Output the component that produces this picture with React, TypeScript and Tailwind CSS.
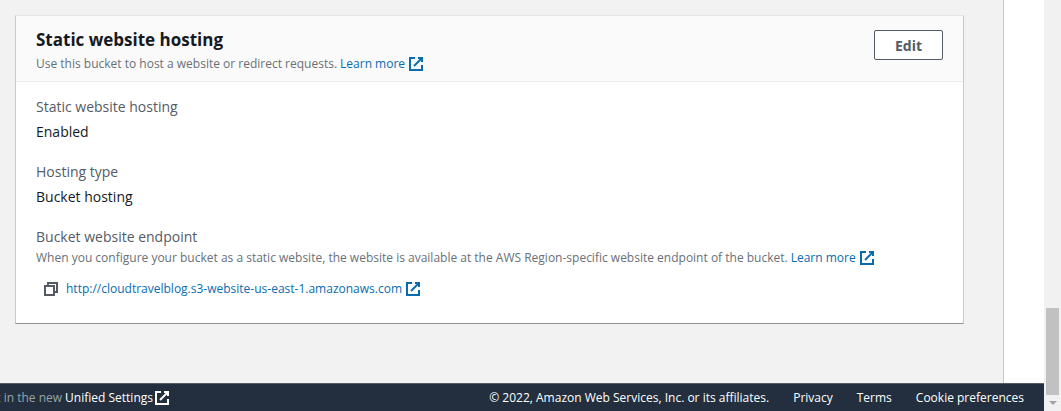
import type { ReactNode } from 'react';

function ExternalIcon() {
  return (
    <svg viewBox="0 0 16 16" className="size-4 shrink-0" fill="none" stroke="currentColor" strokeWidth="2" aria-hidden="true">
      <path d="M10 2h4v4" />
      <path d="m6 10 8-8" />
      <path d="M14 9.048V14H2V2h5" />
    </svg>
  );
}

function ExternalLink({ children }: { children: ReactNode }) {
  return (
    <a href="#" className="inline-flex items-center gap-[3px] text-[#0a6cb0]">
      {children}
      <ExternalIcon />
    </a>
  );
}

function Field({ label, children }: { label: string; children: ReactNode }) {
  return (
    <div>
      <dt className="text-[14px] leading-5 text-[#545b64]">{label}</dt>
      <dd className="mt-[5px] text-[14px] leading-5 text-[#16191f]">{children}</dd>
    </div>
  );
}

export default function App() {
  return (
    <div className="flex h-screen bg-white font-['Open_Sans','Noto_Sans',sans-serif]">
      <div className="flex min-w-0 flex-1 flex-col">
        <div className="flex min-h-0 flex-1">
          <main className="min-w-0 flex-1 border-r border-[#c5c9cc] bg-[#f2f2f2] pt-[15px] pr-[39px] pl-[15px]">
            <section className="border border-x-[#c8cbcc] border-t-[#e4e6e6] border-b-[#8d9296] bg-white">
              <header className="flex items-start justify-between border-b border-[#eaeded] bg-[#fafafa] pt-3 pr-5 pb-[7px] pl-5">
                <div>
                  <h2 className="text-[17px] leading-6 font-bold text-[#16191f]">Static website hosting</h2>
                  <p className="mt-0.5 flex gap-[3px] text-[12px] leading-5 text-[#687078]">
                    Use this bucket to host a website or redirect requests.
                    <ExternalLink>Learn more</ExternalLink>
                  </p>
                </div>
                <button type="button" className="mt-0.5 h-[30px] w-[69px] rounded-[2px] border border-[#545b64] bg-white text-[14px] font-bold text-[#545b64]">
                  Edit
                </button>
              </header>
              <dl className="flex flex-col gap-5 px-5 pt-[15px] pb-6">
                <Field label="Static website hosting">Enabled</Field>
                <Field label="Hosting type">Bucket hosting</Field>
                <div>
                  <dt className="text-[14px] leading-5 text-[#545b64]">Bucket website endpoint</dt>
                  <dd>
                    <p className="mt-px flex gap-[3px] text-[12px] leading-5 text-[#687078]">
                      When you configure your bucket as a static website, the website is available at the AWS Region-specific website endpoint of the bucket.
                      <ExternalLink>Learn more</ExternalLink>
                    </p>
                    <div className="mt-[11px] flex items-center gap-[7px] pl-[7px] text-[12px] leading-5">
                      <button type="button" aria-label="Copy endpoint" className="text-[#545b64]">
                        <svg viewBox="0 0 16 16" className="size-4" fill="none" stroke="currentColor" strokeWidth="2" aria-hidden="true">
                          <path d="M2 5h9v9H2z" />
                          <path d="M5 5V2h9v9h-3" />
                        </svg>
                      </button>
                      <ExternalLink>http://cloudtravelblog.s3-website-us-east-1.amazonaws.com</ExternalLink>
                    </div>
                  </dd>
                </div>
              </dl>
            </section>
          </main>
          <div className="w-10 shrink-0" />
        </div>
        <footer className="flex h-7 shrink-0 items-center justify-between border-t border-[#545b64] bg-[#232f3e] pr-5 text-[12px] text-white">
          <div className="flex w-[170px] items-center justify-end gap-[3px] overflow-hidden whitespace-nowrap">
            <span className="text-[#95a5a6]">t in the new</span>
            <a href="#" className="flex items-center gap-px font-medium">
              Unified Settings
              <ExternalIcon />
            </a>
          </div>
          <div className="flex items-center gap-6 font-medium whitespace-nowrap">
            <span>© 2022, Amazon Web Services, Inc. or its affiliates.</span>
            <a href="#">Privacy</a>
            <a href="#">Terms</a>
            <a href="#">Cookie preferences</a>
          </div>
        </footer>
      </div>
      <div className="flex w-[17px] shrink-0 flex-col items-center justify-end bg-[#f1f1f1]" aria-hidden="true">
        <div className="h-[87px] w-[13px] bg-[#c1c1c1]" />
        <div className="flex h-4 items-center">
          <svg viewBox="0 0 8 4" className="h-1 w-2" fill="#a3a3a3">
            <path d="M0 0h8L4 4z" />
          </svg>
        </div>
      </div>
    </div>
  );
}
